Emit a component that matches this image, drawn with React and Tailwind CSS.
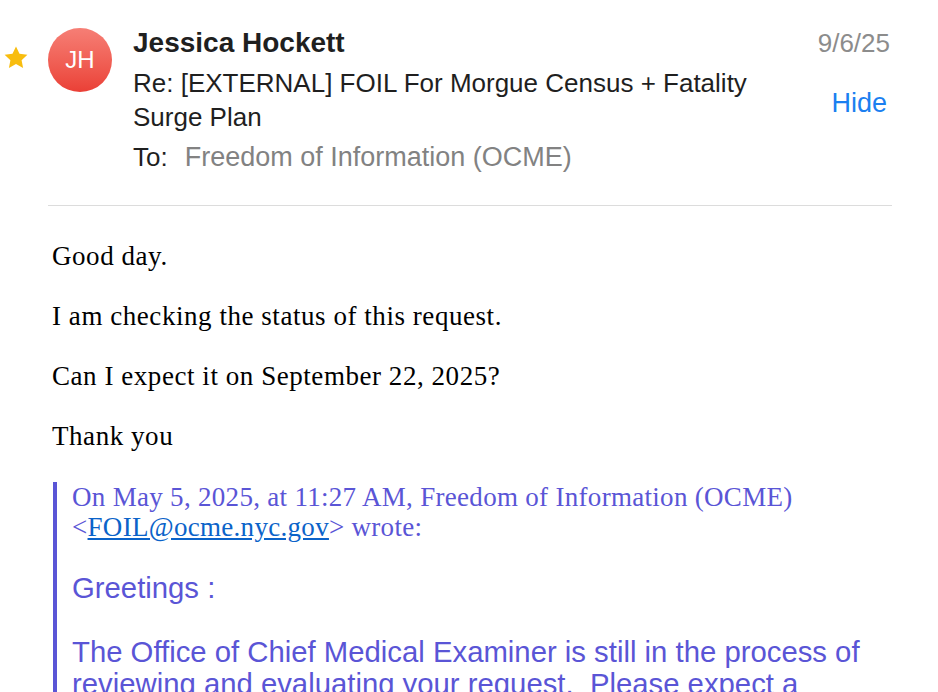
export default function App() {
  return (
    <div className="w-[938px] h-[692px] overflow-hidden bg-white">
      {/* HEADER */}
      <div className="flex pt-[26px] pl-[4px] pr-[48px]">
        <div className="w-[44px] pt-[20px]">
          <svg width="24" height="23" viewBox="0 0 24 23">
            <path
              d="M12 0.5l3.5 7.2 7.9 1-5.8 5.5 1.5 7.8-7.1-3.9-7.1 3.9 1.5-7.8-5.8-5.5 7.9-1z"
              fill="#f8bd0f"
            />
          </svg>
        </div>
        <div className="w-[64px] h-[64px] mt-[2px] rounded-full bg-gradient-to-b from-[#f67e75] to-[#ea3f36] flex items-center justify-center text-white text-[24px] font-['Liberation_Sans',sans-serif]">
          JH
        </div>
        <div className="flex-1 pl-[21px] font-['Liberation_Sans',sans-serif] text-[#1f1f1f]">
          <div className="text-[28px] font-bold leading-[34px]">Jessica Hockett</div>
          <div className="text-[26px] leading-[34px] mt-[6px]">
            Re: [EXTERNAL] FOIL For Morgue Census + Fatality
            <br />
            Surge Plan
          </div>
          <div className="text-[26px] leading-[34px] mt-[6px]">
            To:<span className="ml-[17px] text-[#828282] text-[27px]">Freedom of Information (OCME)</span>
          </div>
        </div>
        <div className="flex flex-col items-end font-['Liberation_Sans',sans-serif] text-[26px]">
          <div className="text-[#8c8c8c] leading-[34px]">9/6/25</div>
          <div className="text-[#1b7ff0] mt-[26px] mr-[3px] leading-[34px] text-[27px]">Hide</div>
        </div>
      </div>
      <div className="ml-[48px] mr-[46px] mt-[31px] border-t border-[#dcdcdc]" />

      {/* BODY */}
      <div className="pl-[52px] pr-[46px] pt-[35px] font-['Liberation_Serif',serif] text-[27px] leading-[30px] tracking-[0.55px] text-black">
        <p>Good day.</p>
        <p className="mt-[30px]">I am checking the status of this request.</p>
        <p className="mt-[30px]">Can I expect it on September 22, 2025?</p>
        <p className="mt-[30px]">Thank you</p>

        <div className="mt-[31px] ml-[1px] border-l-[4px] border-[#5a55d6] pl-[15px] pb-[40px] text-[#5a55d6]">
          <div className="tracking-[0.3px]">
            On May 5, 2025, at 11:27 AM, Freedom of Information (OCME)
            <br />
            &lt;<span className="text-[#0b63c9] underline">FOIL@ocme.nyc.gov</span>&gt; wrote:
          </div>
          <div className="font-['Liberation_Sans',sans-serif] text-[29.3px] leading-[32px] tracking-normal mt-[30px]">
            <p>Greetings :</p>
            <p className="mt-[32px]">
              The Office of Chief Medical Examiner is still in the process of
              <br />
              reviewing and evaluating your request.&nbsp; Please expect a
            </p>
          </div>
        </div>
      </div>
    </div>
  );
}
